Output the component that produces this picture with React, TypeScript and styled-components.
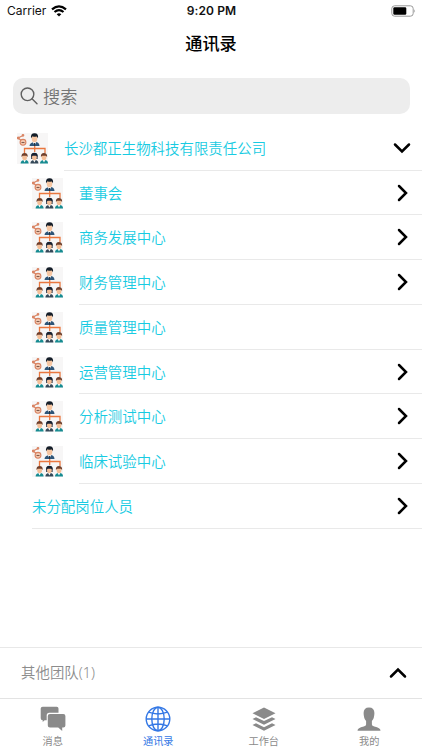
import React from 'react';
import styled, { createGlobalStyle } from 'styled-components';

const GlobalStyle = createGlobalStyle`
  * { box-sizing: border-box; }
  body { margin: 0; background: #fff; font-family: Inter, "Noto Sans CJK SC", sans-serif; }
  svg { display: block; flex: none; }
`;

const Screen = styled.div`
  width: 422px;
  height: 750px;
  display: flex;
  flex-direction: column;
  overflow: hidden;
  background: #fff;
`;

const StatusBar = styled.header`
  height: 22px;
  flex: none;
  display: grid;
  grid-template-columns: 1fr auto 1fr;
  align-items: center;
  padding: 0 6px 0 7px;
  font-size: 12px;
  line-height: 22px;
  color: #111;
`;

const Carrier = styled.div`
  display: flex;
  align-items: center;
  gap: 5px;
`;

const Clock = styled.div`
  font-weight: 600;
  font-size: 12px;
  letter-spacing: 0.12px;
`;

const BatterySlot = styled.div`
  display: flex;
  justify-content: flex-end;
`;

const Title = styled.h1`
  margin: 0;
  height: 44px;
  flex: none;
  font-family: "Noto Sans CJK SC", sans-serif;
  font-size: 17.2px;
  font-weight: 500;
  line-height: 42px;
  text-align: center;
  color: #000;
`;

const SearchBox = styled.div`
  flex: none;
  height: 36.5px;
  margin: 11.8px 12.5px 11.7px;
  padding-left: 7px;
  display: flex;
  align-items: center;
  gap: 5.5px;
  border-radius: 10px;
  background: #ededed;
  color: #757575;
  font-family: "Noto Sans CJK SC", sans-serif;
  font-size: 17.2px;
  font-weight: 350;
  line-height: 36px;
`;

const List = styled.main`
  flex: 1;
`;

const Row = styled.div<{ $indent: number }>`
  height: 44.75px;
  display: flex;
  padding-left: ${({ $indent }) => $indent}px;
`;

const IconCell = styled.div`
  width: 47px;
  flex: none;
  padding-top: 6.8px;
`;

const RowBody = styled.div`
  flex: 1;
  display: flex;
  align-items: center;
  justify-content: space-between;
  padding-right: 11px;
  border-bottom: 1px solid #e9e9e9;
`;

const Label = styled.span`
  font-family: "Noto Sans CJK SC", sans-serif;
  font-size: 14.45px;
  font-weight: 350;
  line-height: 20px;
  color: #18cbe2;
`;

const OtherTeams = styled.section`
  height: 51px;
  flex: none;
  display: flex;
  align-items: center;
  justify-content: space-between;
  padding: 0 15px 1px 21px;
  border-top: 1px solid #e8e8e8;
  font-family: "Noto Sans", "Noto Sans CJK SC", sans-serif;
  font-size: 14.4px;
  font-weight: 350;
  line-height: 20px;
  letter-spacing: 0.05px;
  color: #8c8c8c;
`;

const TabBar = styled.nav`
  height: 52px;
  flex: none;
  display: grid;
  grid-template-columns: repeat(4, 1fr);
  border-top: 1px solid #e3e3e3;
`;

const Tab = styled.div<{ $active?: boolean }>`
  display: flex;
  flex-direction: column;
  align-items: center;
  padding-top: 7px;
  font-family: "Noto Sans CJK SC", sans-serif;
  font-size: 10.2px;
  line-height: 14px;
  color: ${({ $active }) => ($active ? '#3478e5' : '#8a8a8a')};
`;

const TabIcon = styled.div`
  height: 28px;
`;

function Wifi() {
  return (
    <svg width="16" height="12" viewBox="0 0 16 12" fill="none" stroke="#000" strokeWidth="2.2">
      <path d="M1 4.4Q8-1.7 15 4.4" />
      <path d="M3.5 7Q8 3.1 12.5 7" />
      <path d="M5.7 9.2Q8 7.2 10.3 9.2L8 11.5Z" fill="#000" stroke="none" />
    </svg>
  );
}

function Battery() {
  return (
    <svg width="25" height="12" viewBox="0 0 25 12">
      <rect x=".8" y=".8" width="21.4" height="10.4" rx="2.8" fill="#fff" stroke="#999" />
      <rect x="2.3" y="2.3" width="13" height="7.4" rx="1.2" fill="#000" />
      <path d="M23.4 4.2Q24.8 6 23.4 7.8Z" fill="#888" />
    </svg>
  );
}

function SearchIcon() {
  return (
    <svg width="18" height="18" viewBox="0 0 18 18" fill="none" stroke="#606060" strokeWidth="1.4" strokeLinecap="round">
      <circle cx="7.5" cy="7.3" r="6.3" />
      <path d="M12 11.8L17 16.8" />
    </svg>
  );
}

type Direction = 'right' | 'down' | 'up';

const chevronPaths: Record<Direction, string> = {
  right: 'M6 2L13 9L6 16',
  down: 'M2 5.5L9 12.5L16 5.5',
  up: 'M2 12.5L9 5.5L16 12.5',
};

function Chevron({ direction }: { direction: Direction }) {
  return (
    <svg width="18" height="18" viewBox="0 0 18 18" fill="none" stroke="#000" strokeWidth="2.5" strokeLinecap="round">
      <path d={chevronPaths[direction]} />
    </svg>
  );
}

function Member({ x, dark }: { x: number; dark?: boolean }) {
  return (
    <g transform={`translate(${x} 20)`}>
      {dark && <path d="M-3.2 6V2.6Q-3.2-.2 0-.2T3.2 2.6V6Z" fill="#202b3c" />}
      <path d="M-4 10.5Q-4 7.4 0 7T4 10.5Z" fill={dark ? '#344858' : '#168b91'} />
      <path d="M-1.3 7L0 9.5L1.3 7Z" fill="#fff" />
      <ellipse cy="4.1" rx="2.4" ry="3.2" fill="#f4bf98" />
      <path d="M-3.1 4Q-3.4.1 0 .1T3.1 4L1.8 2.7H-1.8Z" fill={dark ? '#172131' : '#6f3f2b'} />
    </g>
  );
}

function OrgIcon() {
  return (
    <svg width="31" height="31" viewBox="0 0 31 31">
      <rect width="31" height="31" fill="#f7f6f6" />
      <g fill="none" stroke="#d98362" strokeWidth="1.1">
        <path d="M1 5L6.5 2.3M1 5L5 8" />
        <circle cx="1.2" cy="5" r="1" />
        <circle cx="6" cy="2.3" r=".8" />
        <circle cx="6" cy="9.3" r="2.9" fill="#f4cbb3" />
        <path d="M4.5 9.5H7.5" stroke="#80594a" />
      </g>
      <path d="M7.5 20V15.5H28V20M17.7 13V19" fill="none" stroke="#e9773f" strokeWidth="1.3" />
      <path d="M12.5 13Q12.7 9.4 17.5 9T22.5 13Z" fill="#2e5578" />
      <path d="M15.7 8.8L17.5 12.5L19.3 8.8Z" fill="#fff" />
      <path d="M17.5 10V13" stroke="#253747" />
      <ellipse cx="17.5" cy="5.4" rx="2.8" ry="3.9" fill="#f6c6a2" />
      <path d="M14 5.3Q13.3 .3 17.5 .2T21 5.3L19.8 3.6Q17 4 15.5 3.2Z" fill="#141d28" />
      <Member x={7.6} />
      <Member x={17.4} dark />
      <Member x={27} />
    </svg>
  );
}

function MessagesIcon() {
  return (
    <svg width="26" height="26" viewBox="0 0 26 26" fill="currentColor">
      <path d="M2.7.7H16.7Q18.5.7 18.5 2.5V6.8H9.2Q6.7 6.8 6.7 9.3V14.2H4.6L2.7 16V14.2Q.7 14.2.7 12.3V2.5Q.7.7 2.7.7Z" />
      <path d="M10 7.9H23.3Q25.4 7.9 25.4 10V19.4Q25.4 21.5 23.3 21.5H22.2V25L18.2 21.5H10Q7.8 21.5 7.8 19.4V10Q7.8 7.9 10 7.9Z" />
    </svg>
  );
}

function GlobeIcon() {
  return (
    <svg width="26" height="26" viewBox="0 0 26 26" fill="none" stroke="currentColor" strokeWidth="1.4">
      <circle cx="13" cy="13" r="11.8" />
      <ellipse cx="13" cy="13" rx="6.2" ry="11.8" />
      <path d="M13 1V25M1 13H25M3.5 6.2Q13 9.7 22.5 6.2M3.5 19.8Q13 16.3 22.5 19.8" />
    </svg>
  );
}

function LayersIcon() {
  return (
    <svg width="24" height="26" viewBox="0 0 24 26" fill="currentColor">
      <path d="M12 1.5L23.5 7.2L12 12.9L.5 7.2Z" />
      <path d="M.5 12.9L4 11.2L12 15.1L20 11.2L23.5 12.9L12 18.7Z" />
      <path d="M.5 19L4 17.2L12 21.2L20 17.2L23.5 19L12 24.7Z" />
    </svg>
  );
}

function PersonIcon() {
  return (
    <svg width="24" height="26" viewBox="0 0 24 26" fill="currentColor">
      <path d="M12 1.4Q6.6 1.4 6.6 7Q6.6 12.3 9.1 15V18.4Q9.1 20 6.7 20.6Q.5 21.8.5 24.8H23.5Q23.5 21.8 17.3 20.6Q14.9 20 14.9 18.4V15Q17.4 12.3 17.4 7Q17.4 1.4 12 1.4Z" />
    </svg>
  );
}

const departments = [
  { name: '董事会', expandable: true },
  { name: '商务发展中心', expandable: true },
  { name: '财务管理中心', expandable: true },
  { name: '质量管理中心', expandable: false },
  { name: '运营管理中心', expandable: true },
  { name: '分析测试中心', expandable: true },
  { name: '临床试验中心', expandable: true },
];

const tabs = [
  { name: '消息', icon: <MessagesIcon /> },
  { name: '通讯录', icon: <GlobeIcon />, active: true },
  { name: '工作台', icon: <LayersIcon /> },
  { name: '我的', icon: <PersonIcon /> },
];

export default function App() {
  return (
    <Screen>
      <GlobalStyle />
      <StatusBar>
        <Carrier>Carrier <Wifi /></Carrier>
        <Clock>9:20 PM</Clock>
        <BatterySlot><Battery /></BatterySlot>
      </StatusBar>
      <Title>通讯录</Title>
      <SearchBox><SearchIcon />搜索</SearchBox>
      <List>
        <Row $indent={17}>
          <IconCell><OrgIcon /></IconCell>
          <RowBody><Label>长沙都正生物科技有限责任公司</Label><Chevron direction="down" /></RowBody>
        </Row>
        {departments.map(({ name, expandable }) => (
          <Row key={name} $indent={32}>
            <IconCell><OrgIcon /></IconCell>
            <RowBody><Label>{name}</Label>{expandable && <Chevron direction="right" />}</RowBody>
          </Row>
        ))}
        <Row $indent={32}>
          <RowBody><Label>未分配岗位人员</Label><Chevron direction="right" /></RowBody>
        </Row>
      </List>
      <OtherTeams>其他团队(1)<Chevron direction="up" /></OtherTeams>
      <TabBar>
        {tabs.map(({ name, icon, active }) => (
          <Tab key={name} $active={active}><TabIcon>{icon}</TabIcon>{name}</Tab>
        ))}
      </TabBar>
    </Screen>
  );
}
